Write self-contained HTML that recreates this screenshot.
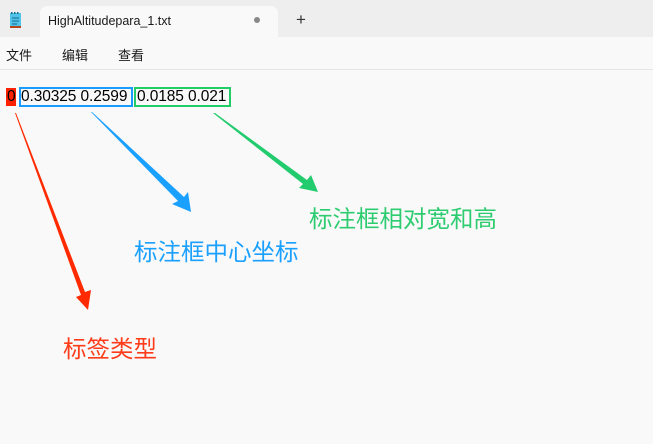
<!DOCTYPE html><html><head><meta charset="utf-8"><style>
body{margin:0;width:653px;height:444px;background:#f9f9f9;position:relative;overflow:hidden;font-family:"Liberation Sans","Noto Sans CJK SC",sans-serif}
.top{position:absolute;left:0;top:0;width:653px;height:37px;background:#eeeeee}
.tab{position:absolute;left:40px;top:6px;width:238px;height:31px;background:#f9f9f9;border-radius:7px 7px 0 0}
.a{position:absolute;white-space:nowrap}
</style></head><body>
<div class="top"></div>
<div class="tab"></div>
<svg class="a" style="left:8px;top:11px" width="16" height="18"><rect x="2" y="2" width="11" height="14" fill="#4fc3e8"/><rect x="2" y="15" width="11" height="2" fill="#b5451b"/><g stroke="#1a6a8c" stroke-width="1"><line x1="4" y1="7" x2="11" y2="7"/><line x1="4" y1="10" x2="11" y2="10"/><line x1="4" y1="13" x2="9" y2="13"/></g><g fill="#1a6a8c"><rect x="3" y="1" width="1.5" height="2"/><rect x="6" y="1" width="1.5" height="2"/><rect x="9" y="1" width="1.5" height="2"/></g></svg>
<div class="a" style="left:48px;top:14px;font-size:12.5px;color:#1a1a1a">HighAltitudepara_1.txt</div>
<div class="a" style="left:254px;top:17px;width:6px;height:6px;border-radius:3px;background:#888"></div>
<div class="a" style="left:296px;top:10px;font-size:17px;color:#333">+</div>
<div class="a" style="left:6px;top:45px;font-size:13px;color:#1a1a1a">文件</div>
<div class="a" style="left:62px;top:45px;font-size:13px;color:#1a1a1a">编辑</div>
<div class="a" style="left:118px;top:45px;font-size:13px;color:#1a1a1a">查看</div>
<div class="a" style="left:0;top:69px;width:653px;height:1px;background:#e5e5e5"></div>
<div class="a" style="left:6px;top:88px;width:10px;height:18px;background:#ff2200"></div>
<div class="a" style="left:7px;top:88px;font-size:15.5px;color:#000;line-height:18px">0</div>
<div class="a" style="left:19px;top:87px;width:110px;height:16px;border:2px solid #1a9cff"></div>
<div class="a" style="left:21px;top:88px;font-size:15.5px;color:#000;line-height:18px;letter-spacing:-0.1px">0.30325 0.2599</div>
<div class="a" style="left:134px;top:87px;width:93px;height:16px;border:2px solid #22cc66"></div>
<div class="a" style="left:137px;top:88px;font-size:15.5px;color:#000;line-height:18px;letter-spacing:-0.1px">0.0185 0.021</div>
<svg class="a" style="left:0;top:0" width="653" height="444">
<polygon points="15,113 16,113 85,292 91,290 88,310 76,297 81,295" fill="#ff2a00"/>
<polygon points="91,112 92,112 184,197 188,192 191,212 172,204 178,201" fill="#1aa0ff"/>
<polygon points="213,113 215,113 307,180 311,175 318,192 299,188 303,184" fill="#22cc6e"/>
</svg>
<div class="a" style="left:309px;top:200px;font-size:23.5px;color:#2ecc71">标注框相对宽和高</div>
<div class="a" style="left:134px;top:233px;font-size:23.5px;color:#1aa0ff">标注框中心坐标</div>
<div class="a" style="left:63px;top:330px;font-size:23.5px;color:#ff3c1a">标签类型</div>
</body></html>
